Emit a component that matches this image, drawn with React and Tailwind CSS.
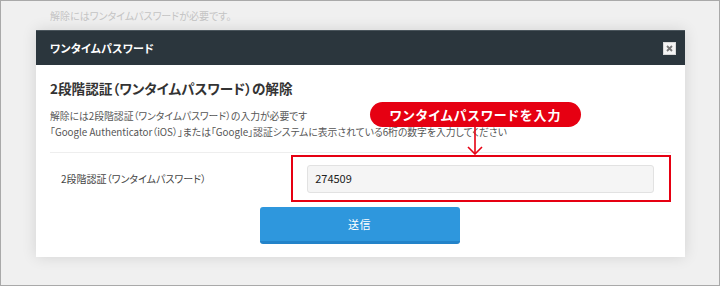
export default function App() {
    const font = { fontFamily: '"Noto Sans CJK JP", "Noto Sans", sans-serif' };
    return (
        <div className="relative w-[720px] h-[286px] overflow-hidden border border-[#a9a9a9] bg-[#f0f0f0] [font-feature-settings:'palt']" style={font}>
            {/* background page */}
            <div className="pl-[49px] pt-[9px] text-[10px] leading-[12px] text-[#c4c4c4]">解除にはワンタイムパスワードが必要です。</div>
            <div className="ml-[276px] mt-[9px] w-[166px] h-[10px] bg-[#c9dcea]" />

            {/* modal */}
            <div className="absolute left-[35px] top-[29px] w-[649px] bg-white shadow-[0_0_14px_rgba(0,0,0,0.12)]">
                <div className="flex items-center justify-between h-[35px] bg-[#2b363d] border-t border-[#4a555c] pl-[14px] pr-[9px]">
                    <span className="text-[11px] font-bold text-white tracking-[0.2px]">ワンタイムパスワード</span>
                    <span className="flex items-center justify-center w-[13px] h-[13px] bg-[#f4f4f4] border border-[#d8d8d8]">
                        <svg width="7" height="7" viewBox="0 0 7 7">
                            <path d="M1 1L6 6M6 1L1 6" stroke="#777" strokeWidth="1.8" />
                        </svg>
                    </span>
                </div>

                <div className="px-[14px] pt-[14px] pb-[13px]">
                    <h1 className="text-[13.6px] leading-[18px] font-bold text-[#333]">2段階認証（ワンタイムパスワード）の解除</h1>
                    <p className="mt-[11px] text-[9.8px] leading-[16px] text-[#555]">
                        解除には2段階認証（ワンタイムパスワード）の入力が必要です<br />
                        「Google Authenticator（iOS）」または「Google」認証システムに表示されている6桁の数字を入力してください
                    </p>
                    <div className="mt-[12px] border-t border-[#eeeeee]" />

                    <div className="flex items-center mt-[2px]">
                        <div className="w-[244px] pl-[11px] text-[10px] text-[#444]">2段階認証（ワンタイムパスワード）</div>
                        <div className="w-[384px] h-[47px] border-2 border-[#e60012] flex items-center pl-[14px] pr-[15px]">
                            <div className="flex-1 h-[28px] flex items-center pl-[7px] bg-[#f5f5f5] border border-[#e2e2e2] rounded-[3px] text-[11px] text-[#222]">274509</div>
                        </div>
                    </div>

                    <div className="flex justify-center mt-[5px] pr-[2px]">
                        <button className="w-[200px] h-[37px] rounded-[3px] bg-[#2e97dd] border-b-[3px] border-[#2383c9] text-white text-[11px] tracking-[0.5px]">送信</button>
                    </div>
                </div>
            </div>

            {/* annotation */}
            <div className="absolute left-[369px] top-[101px] w-[211px] h-[25px] rounded-full bg-[#e60012] flex items-center justify-center text-white text-[13px] font-bold tracking-[1px]">
                ワンタイムパスワードを入力
            </div>
            <svg className="absolute left-[465px] top-[126px]" width="18" height="28" viewBox="0 0 18 28">
                <path d="M9 0V26" stroke="#e60012" strokeWidth="1.6" />
                <path d="M2 20L9 27L16 20" stroke="#e60012" strokeWidth="1.6" fill="none" />
            </svg>
        </div>
    );
}
